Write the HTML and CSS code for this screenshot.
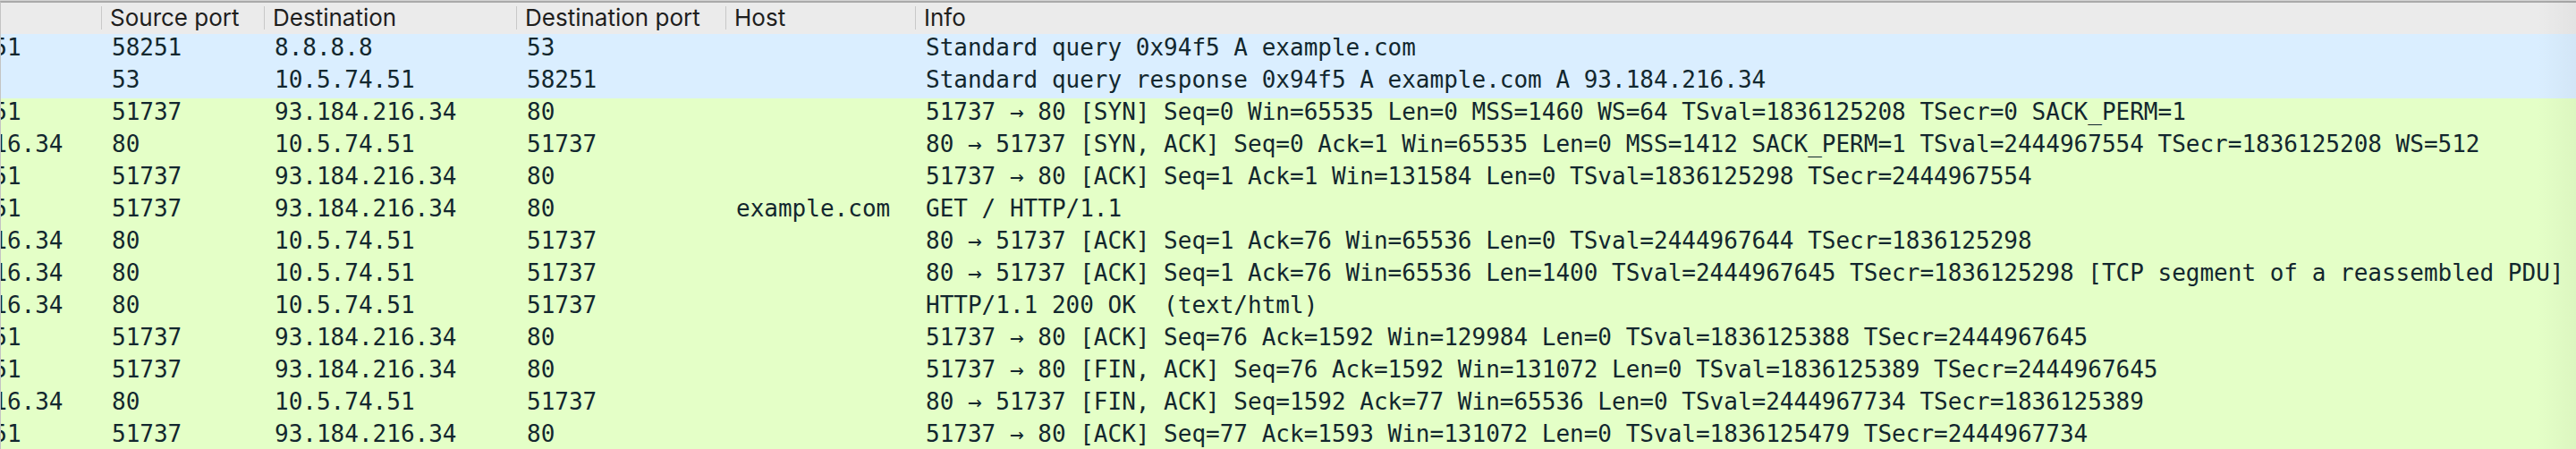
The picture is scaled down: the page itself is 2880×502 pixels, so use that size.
FILE: index.html
```html
<!DOCTYPE html>
<html lang="en">
<head>
<meta charset="utf-8">
<title>Packet list</title>
<link rel="stylesheet" href="styles.css">
</head>
<body>
<div class="packet-list">
  <div class="scroller">
    <table class="packets">
      <colgroup>
        <col class="c-src">
        <col class="c-sport">
        <col class="c-dst">
        <col class="c-dport">
        <col class="c-host">
        <col class="c-info">
      </colgroup>
      <thead>
        <tr>
          <th><span class="label">Source</span></th>
          <th><span class="label">Source port</span></th>
          <th><span class="label">Destination</span></th>
          <th><span class="label">Destination port</span></th>
          <th><span class="label">Host</span></th>
          <th><span class="label">Info</span></th>
        </tr>
      </thead>
      <tbody>
        <tr class="udp"><td>10.5.74.51</td><td>58251</td><td>8.8.8.8</td><td>53</td><td></td><td>Standard query 0x94f5 A example.com</td></tr>
        <tr class="udp"><td>8.8.8.8</td><td>53</td><td>10.5.74.51</td><td>58251</td><td></td><td>Standard query response 0x94f5 A example.com A 93.184.216.34</td></tr>
        <tr class="http"><td>10.5.74.51</td><td>51737</td><td>93.184.216.34</td><td>80</td><td></td><td>51737 → 80 [SYN] Seq=0 Win=65535 Len=0 MSS=1460 WS=64 TSval=1836125208 TSecr=0 SACK_PERM=1</td></tr>
        <tr class="http"><td>93.184.216.34</td><td>80</td><td>10.5.74.51</td><td>51737</td><td></td><td>80 → 51737 [SYN, ACK] Seq=0 Ack=1 Win=65535 Len=0 MSS=1412 SACK_PERM=1 TSval=2444967554 TSecr=1836125208 WS=512</td></tr>
        <tr class="http"><td>10.5.74.51</td><td>51737</td><td>93.184.216.34</td><td>80</td><td></td><td>51737 → 80 [ACK] Seq=1 Ack=1 Win=131584 Len=0 TSval=1836125298 TSecr=2444967554</td></tr>
        <tr class="http"><td>10.5.74.51</td><td>51737</td><td>93.184.216.34</td><td>80</td><td>example.com</td><td>GET / HTTP/1.1</td></tr>
        <tr class="http"><td>93.184.216.34</td><td>80</td><td>10.5.74.51</td><td>51737</td><td></td><td>80 → 51737 [ACK] Seq=1 Ack=76 Win=65536 Len=0 TSval=2444967644 TSecr=1836125298</td></tr>
        <tr class="http"><td>93.184.216.34</td><td>80</td><td>10.5.74.51</td><td>51737</td><td></td><td>80 → 51737 [ACK] Seq=1 Ack=76 Win=65536 Len=1400 TSval=2444967645 TSecr=1836125298 [TCP segment of a reassembled PDU]</td></tr>
        <tr class="http"><td>93.184.216.34</td><td>80</td><td>10.5.74.51</td><td>51737</td><td></td><td>HTTP/1.1 200 OK  (text/html)</td></tr>
        <tr class="http"><td>10.5.74.51</td><td>51737</td><td>93.184.216.34</td><td>80</td><td></td><td>51737 → 80 [ACK] Seq=76 Ack=1592 Win=129984 Len=0 TSval=1836125388 TSecr=2444967645</td></tr>
        <tr class="http"><td>10.5.74.51</td><td>51737</td><td>93.184.216.34</td><td>80</td><td></td><td>51737 → 80 [FIN, ACK] Seq=76 Ack=1592 Win=131072 Len=0 TSval=1836125389 TSecr=2444967645</td></tr>
        <tr class="http"><td>93.184.216.34</td><td>80</td><td>10.5.74.51</td><td>51737</td><td></td><td>80 → 51737 [FIN, ACK] Seq=1592 Ack=77 Win=65536 Len=0 TSval=2444967734 TSecr=1836125389</td></tr>
        <tr class="http"><td>10.5.74.51</td><td>51737</td><td>93.184.216.34</td><td>80</td><td></td><td>51737 → 80 [ACK] Seq=77 Ack=1593 Win=131072 Len=0 TSval=1836125479 TSecr=2444967734</td></tr>
      </tbody>
    </table>
  </div>
  <div class="vscroll-shade"></div>
</div>
</body>
</html>
```

FILE: styles.css
```css
html, body {
  margin: 0;
  padding: 0;
  background: #e4ffc7;
  overflow: hidden;
}

.packet-list {
  position: relative;
  height: 502px;
  overflow: hidden;
  border-top: 1px solid #d4d4d4;
  box-sizing: border-box;
}

.scroller {
  border-top: 2px solid #a9a9a9;
  overflow: hidden;
  border-left: 1px solid #c4c4c4;
}

.packets {
  margin-left: -146px;
  width: calc(100% + 146px);
  table-layout: fixed;
  border-collapse: collapse;
  border-spacing: 0;
}

.c-src { width: 258px; }
.c-sport { width: 182px; }
.c-dst { width: 282px; }
.c-dport { width: 234px; }
.c-host { width: 212px; }

.packets th {
  background: #ebebeb;
  padding: 4px 0 5px 0;
  text-align: left;
  font-family: Inter, "Liberation Sans", sans-serif;
  font-size: 26px;
  font-weight: 400;
  color: #1e1e1e;
  white-space: nowrap;
  overflow: hidden;
}

.packets th .label {
  display: block;
  height: 26px;
  line-height: 26px;
  padding-left: 9px;
  border-left: 1px solid #c8c8c8;
}

.packets td {
  height: 30px;
  padding: 0 0 6px 12px;
  font-family: "DejaVu Sans Mono", "Liberation Mono", monospace;
  font-size: 26px;
  line-height: 30px;
  color: #12272e;
  white-space: pre;
  overflow: hidden;
}

.packets tr.udp td { background: #daeeff; }
.packets tr.http td { background: #e4ffc7; }

.vscroll-shade {
  position: absolute;
  top: 0;
  right: 0;
  width: 44px;
  height: 100%;
  background: linear-gradient(to right, rgba(0, 0, 0, 0), rgba(0, 0, 0, 0.035));
  pointer-events: none;
}
```
